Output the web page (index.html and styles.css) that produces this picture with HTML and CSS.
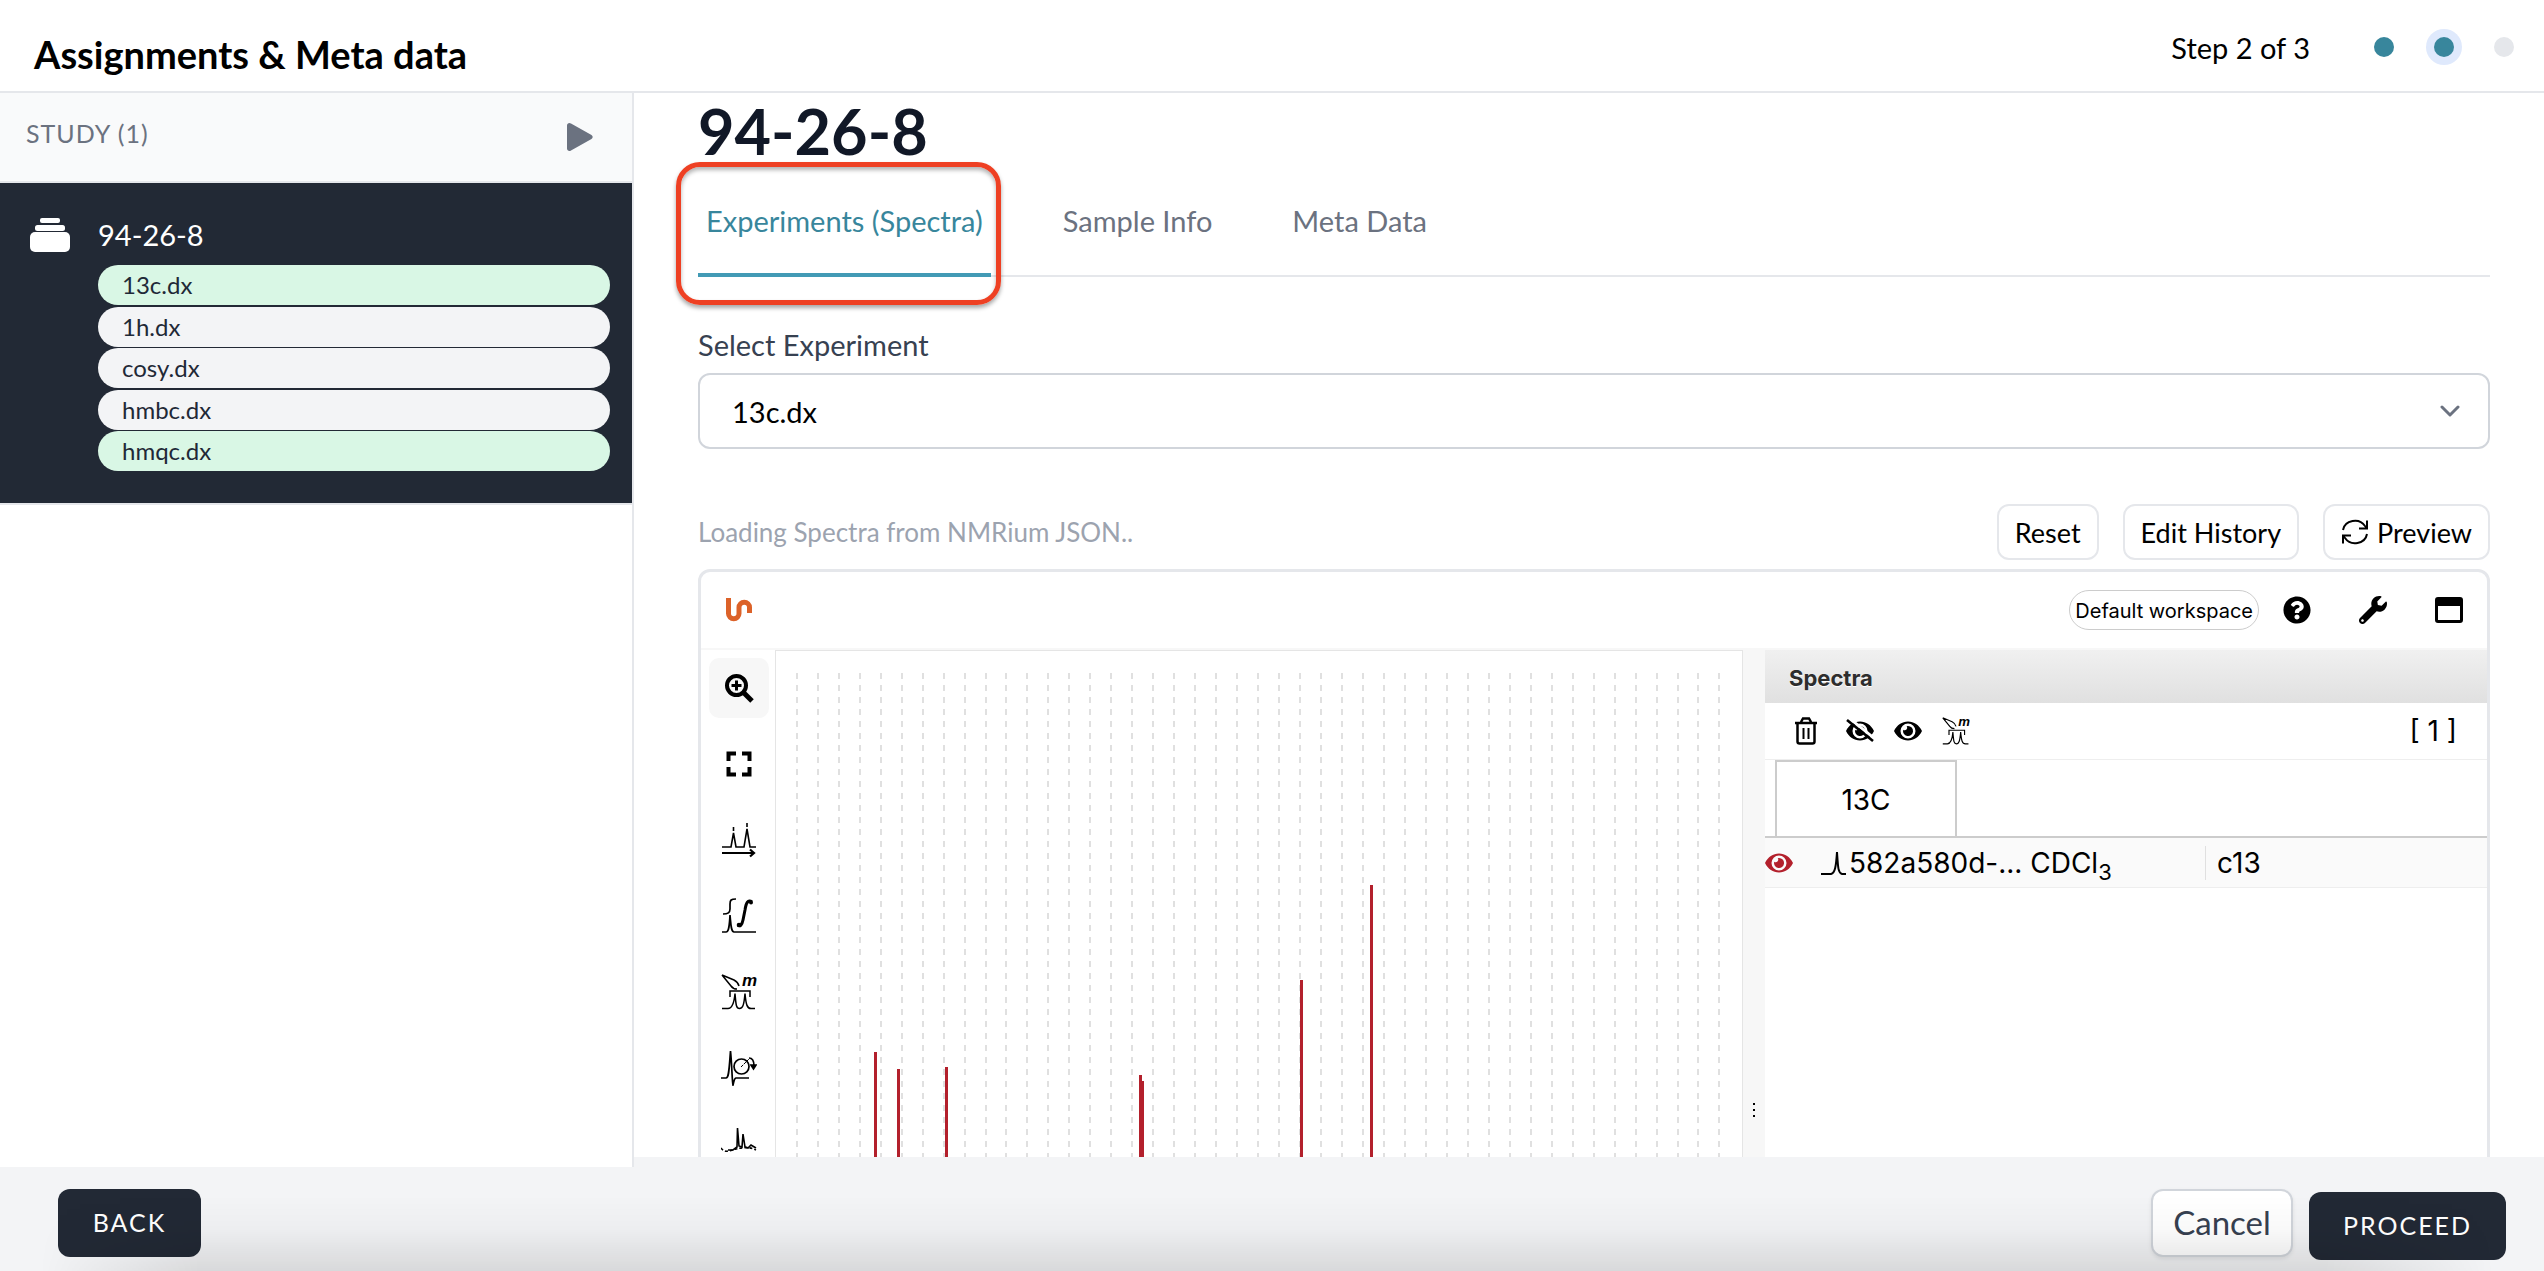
FILE: index.html
```html
<!DOCTYPE html>
<html lang="en">
<head>
<meta charset="utf-8">
<title>Assignments &amp; Meta data</title>
<link rel="stylesheet" href="styles.css">
</head>
<body>
<div class="page">
  <header class="topbar">
    <h2 class="topbar-title">Assignments &amp; Meta data</h2>
    <nav class="steps" aria-label="Progress">
      <span class="steps-label">Step 2 of 3</span>
      <span class="dot dot-done"></span>
      <span class="dot dot-current"></span>
      <span class="dot"></span>
    </nav>
  </header>

  <div class="body">
    <aside class="sidebar">
      <div class="study-head">
        <span class="study-label">STUDY (1)</span>
        <button class="icon-btn" aria-label="Play"><svg width="28" height="30" viewBox="0 0 28 30"><path d="M1 3.500C1 1.300 3.200.300 5 1.500L25.500 13c1.600 1 1.600 3 0 4L5 28.500C3.200 29.700 1 28.700 1 26.500z" fill="#6b7280"/></svg></button>
      </div>
      <section class="study">
        <svg class="study-icon" width="40" height="36" viewBox="0 0 40 36" fill="#fff"><rect x="10" y="1" width="20" height="5" rx="2"/><rect x="5" y="8" width="30" height="6" rx="2.500"/><rect x="0" y="15" width="40" height="20" rx="5"/></svg>
        <div class="study-body">
          <div class="study-name">94-26-8</div>
          <ul class="files">
            <li class="file file-done">13c.dx</li>
            <li class="file">1h.dx</li>
            <li class="file">cosy.dx</li>
            <li class="file">hmbc.dx</li>
            <li class="file file-done">hmqc.dx</li>
          </ul>
        </div>
      </section>
    </aside>

    <main class="main">
      <h1 class="main-title">94-26-8</h1>
      <nav class="tabs">
        <a class="tab tab-active" href="#experiments">Experiments (Spectra)</a>
        <a class="tab" href="#sample">Sample Info</a>
        <a class="tab" href="#meta">Meta Data</a>
      </nav>

      <label class="field-label" for="experiment">Select Experiment</label>
      <div class="select-wrap">
        <select id="experiment" class="select"><option>13c.dx</option><option>1h.dx</option></select>
        <svg class="chevron" width="20" height="12" viewBox="0 0 20 12" fill="none" stroke="#6b7280" stroke-width="3" stroke-linecap="round" stroke-linejoin="round"><path d="M2 2l8 8 8-8"/></svg>
      </div>

      <div class="actions">
        <span class="status">Loading Spectra from NMRium JSON..</span>
        <button class="btn">Reset</button>
        <button class="btn">Edit History</button>
        <button class="btn"><svg width="28" height="26" viewBox="0 0 28 26" fill="none" stroke="#000" stroke-width="2"><path d="M2 11A12 11 0 0 1 24 7l2 2.500M26 1.500v8h-8M26 15A12 11 0 0 1 4 19l-2-2.500M2 24.500v-8h8"/></svg>Preview</button>
      </div>

      <div class="nmr">
        <div class="nmr-top">
          <svg class="logo" width="28" height="26" viewBox="0 0 28 26" fill="none" stroke="#dc6229" stroke-width="5"><path d="M3.500 1v15.500a5.200 5.200 0 0 0 10.500 0v-6a5.200 5.200 0 0 1 10.500 0V16"/></svg>
          <div class="nmr-tools">
            <button class="workspace">Default workspace</button>
            <button class="icon-btn" aria-label="Help"><svg width="28" height="28" viewBox="0 0 512 512"><path d="M504 256c0 137-111 248-248 248S8 393 8 256 119 8 256 8s248 111 248 248zM262.700 90c-54.500 0-89.300 23-116.500 63.800-3.500 5.300-2.400 12.400 2.700 16.300l34.700 26.300c5.200 3.900 12.600 3 16.700-2.100 17.900-22.700 30.100-35.800 57.300-35.800 20.400 0 45.700 13.100 45.700 33 0 15-12.400 22.700-32.500 34C247.100 238.500 216 255 216 296v4c0 6.600 5.400 12 12 12h56c6.600 0 12-5.400 12-12v-1.300c0-28.500 83.200-29.600 83.200-106.700 0-58-60.200-102-116.500-102zM256 338c-25.400 0-46 20.600-46 46s20.600 46 46 46 46-20.600 46-46-20.600-46-46-46z"/></svg></button>
            <button class="icon-btn" aria-label="Settings"><svg width="28" height="28" viewBox="0 0 512 512"><path d="M507.700 109.100c-2.200-9-13.500-12.100-20.100-5.500l-74.400 74.400-67.900-11.300L334 98.900l74.400-74.400c6.600-6.600 3.400-17.900-5.700-20.200-47.400-11.700-99.600.9-136.600 37.900-39.600 39.600-50.500 97.100-34.100 147.200L18.700 402.800c-25 25-25 65.500 0 90.500s65.500 25 90.500 0l213.200-213.200c50.100 16.700 107.500 5.700 147.400-34.200 37-37 49.700-89.400 37.900-136.800zM64 472c-13.200 0-24-10.800-24-24 0-13.300 10.700-24 24-24s24 10.700 24 24c0 13.200-10.700 24-24 24z"/></svg></button>
            <button class="icon-btn" aria-label="Full screen"><svg width="28" height="26" viewBox="0 0 28 26"><path fill-rule="evenodd" d="M3 0h22a3 3 0 0 1 3 3v20a3 3 0 0 1-3 3H3a3 3 0 0 1-3-3V3a3 3 0 0 1 3-3zM3 9v14h22V9z"/></svg></button>
          </div>
        </div>

        <div class="nmr-body">
          <div class="toolbar">
            <button class="tool tool-active" aria-label="Zoom"><svg width="36" height="36" viewBox="0 0 36 36" fill="none" stroke="#000"><circle cx="15.500" cy="15.500" r="9.500" stroke-width="4"/><path d="M23 23l8 8" stroke-width="5"/><path d="M15.500 10.500v10M10.500 15.500h10" stroke-width="3"/></svg></button>
            <button class="tool" aria-label="Fit"><svg width="36" height="36" viewBox="0 0 36 36" fill="none" stroke="#000" stroke-width="4"><path d="M7.500 15V7.500H15M21 7.500h7.500V15M28.500 21v7.500H21M15 28.500H7.500V21"/></svg></button>
            <button class="tool" aria-label="Peak picking"><svg width="36" height="36" viewBox="0 0 36 36" fill="none" stroke="#000" stroke-width="1.600"><path d="M1 25h9l2.500-14L15 25h8l3-18 3 18h6M12.500 5v4M26 1v4"/><path d="M1 31h31M29 27.500l4 3.500-4 3.500" stroke-width="2.200"/></svg></button>
            <button class="tool" aria-label="Integration"><svg width="36" height="36" viewBox="0 0 36 36" fill="none" stroke="#000" stroke-width="1.700"><path d="M1 34h4c3 0 3.500-7 4-17 1 10 1 17 4 17h22M2 16c5 0 7-1 7-5V6c0-4 1-5 6-5"/><path d="M31 4c-4-3-6 1-7 8l-2 10c-1 5-3 7-5 5" stroke-width="3"/><circle cx="30" cy="4.500" r="2" fill="#000" stroke="none"/><circle cx="18" cy="27" r="2.300" fill="#000" stroke="none"/></svg></button>
            <button class="tool" aria-label="Multiplets"><svg width="36" height="36" viewBox="0 0 36 36"><use href="#multiplet"/></svg></button>
            <button class="tool" aria-label="Phase correction"><svg width="36" height="36" viewBox="0 0 36 36" fill="none" stroke="#000" stroke-width="1.700"><path d="M0 28h5c3 0 3-8 4.500-27 1.500 14 1.500 30 2.500 34 1-3 1-7 3-7h13"/><circle cx="20.500" cy="16.500" r="7.500"/><path d="M20 17l8-8" stroke-width="1" stroke-dasharray="3 1"/><path d="M28 8c3 0 5 3 5 8" /><path d="M30 15h5l-2.500 4z" fill="#000"/></svg></button>
            <button class="tool" aria-label="Baseline correction"><svg width="36" height="36" viewBox="0 0 36 36" fill="none" stroke="#000" stroke-width="1.600"><path d="M7 24h5l4-3 .500-19 1.500 18 3 1 1-13 2 13 3 1 3-3 5 3"/><path d="M0 22c4 6 10 2 15 1s12-3 20 1" stroke-dasharray="3 2"/></svg></button>
          </div>

          <div class="plot">
            <svg class="chart" width="966" height="540" viewBox="0 0 966 540" role="img" aria-label="13C spectrum">
              <path class="grid-lines" d="M22 23V540M43 23V540M64 23V540M85 23V540M106 23V540M127 23V540M148 23V540M169 23V540M190 23V540M211 23V540M231 23V540M252 23V540M273 23V540M294 23V540M315 23V540M336 23V540M357 23V540M378 23V540M399 23V540M420 23V540M441 23V540M462 23V540M483 23V540M504 23V540M525 23V540M546 23V540M567 23V540M588 23V540M609 23V540M630 23V540M651 23V540M672 23V540M693 23V540M714 23V540M735 23V540M756 23V540M777 23V540M798 23V540M819 23V540M840 23V540M861 23V540M882 23V540M903 23V540M923 23V540M944 23V540"/>
              <path class="peaks" d="M100.500 402V540M123.500 419V540M171.500 417V540M365.500 425V540M367.500 431V540M526.500 330V540M596.500 235V540"/>
            </svg>
          </div>

          <div class="splitter"><svg width="4" height="16" viewBox="0 0 4 16"><path d="M1 1h2v2H1zM1 7h2v2H1zM1 13h2v2H1z"/></svg></div>

          <section class="panel">
            <h3 class="panel-title">Spectra</h3>
            <div class="panel-tools">
              <button class="icon-btn icon-delete" aria-label="Delete"><svg width="24" height="28" viewBox="0 0 24 28" fill="none" stroke="#000" stroke-width="2.500"><path d="M1 6h22M7 5l2-3.500h6L17 5M3.500 6v18.500q0 2 2 2h13q2 0 2-2V6"/><path d="M9.500 11v11M14.500 11v11" stroke-width="2"/></svg></button>
              <button class="icon-btn" aria-label="Hide"><svg width="28" height="28" viewBox="0 0 28 28"><use href="#eye"/><path d="M3 1l26 21" stroke="#fff" stroke-width="3"/><path d="M1 3l26 21" stroke="#000" stroke-width="2.600"/></svg></button>
              <button class="icon-btn" aria-label="Show"><svg width="28" height="28" viewBox="0 0 28 28"><use href="#eye"/></svg></button>
              <button class="icon-btn" aria-label="Analyse multiplets"><svg width="28" height="28" viewBox="0 0 36 36"><use href="#multiplet"/></svg></button>
              <span class="count">[ 1 ]</span>
            </div>
            <div class="nuclei"><button class="nucleus">13C</button></div>
            <table class="spectra">
              <tr>
                <td class="col-eye"><svg width="28" height="28" viewBox="0 0 28 28" fill="#b3202c"><use href="#eye"/></svg></td>
                <td class="col-name"><svg class="peak-icon" width="26" height="26" viewBox="0 0 26 26" fill="none" stroke="#000" stroke-width="2"><path d="M0 24h10c4-1 5-7 6-22 1 15 1 21 5 22h4"/></svg>582a580d-... CDCl<sub>3</sub></td>
                <td class="col-exp"><span class="exp">c13</span></td>
              </tr>
            </table>
          </section>
        </div>
      </div>
    </main>
  </div>

  <footer class="footer">
    <button class="foot-btn foot-dark foot-back">BACK</button>
    <button class="foot-btn foot-light">Cancel</button>
    <button class="foot-btn foot-dark foot-proceed">PROCEED</button>
  </footer>
</div>

<svg class="defs" width="0" height="0">
  <defs>
    <g id="eye"><path fill-rule="evenodd" d="M0 14C3 8 8 4.500 14 4.500S25 8 28 14c-3 6-8 9.500-14 9.500S3 20 0 14zM14 6.500a7.500 7.500 0 1 0 0 15 7.500 7.500 0 0 0 0-15zM14 9a5 5 0 1 1-4.800 3.700 2.500 2.500 0 0 0 3.500-3.500A5 5 0 0 1 14 9z"/></g>
    <g id="multiplet" fill="none" stroke="#000" stroke-width="1.500"><path d="M1 1l12 5q4 2 5 6M1 1l9 11q2 3 6 3M9 23v-6h20v6"/><path d="M1 34.500h6c4 0 6-4 7-15 1 11 1 15 4.500 15s4.500-4 5.500-15c1 11 2 15 6 15h4"/><text class="glyph-m" x="21" y="12">m</text></g>
  </defs>
</svg>
</body>
</html>
```
FILE: styles.css
```css
* { box-sizing: border-box; }
body { margin: 0; background: #fff; color: #000; font-family: Lato, "Open Sans", sans-serif; font-size: 29px; }
h1, h2, h3, ul { margin: 0; padding: 0; }
button { font: inherit; color: inherit; cursor: pointer; }
svg { display: block; flex: none; }
.defs { position: absolute; }
.icon-btn { display: flex; padding: 0; border: 0; background: none; }

.page { display: flex; flex-direction: column; height: 100vh; overflow: hidden; }

.topbar { display: flex; justify-content: space-between; flex: none; height: 93px; padding: 0 30px 0 34px; border-bottom: 2px solid #e5e7eb; }
.topbar-title { padding-top: 32px; font-size: 38px; line-height: 44px; font-weight: 700; }
.steps { display: flex; align-items: center; align-self: flex-start; height: 94px; gap: 40px; }
.steps-label { padding-right: 24px; }
.dot { width: 20px; height: 20px; border-radius: 50%; background: #e5e7eb; }
.dot-done, .dot-current { background: #38869c; }
.dot-current { box-shadow: 0 0 0 8px #dfe9fc; }

.body { display: flex; flex: 1; min-height: 0; }
.sidebar { position: relative; z-index: 1; flex: none; width: 634px; margin-bottom: -10px; border-right: 2px solid #e5e7eb; background: #fff; }
.study-head { display: flex; justify-content: space-between; align-items: flex-start; height: 90px; padding: 24px 38px 0 26px; border-bottom: 2px solid #e5e7eb; background: #f9fafb; }
.study-head .icon-btn { margin-top: 5px; }
.study-label { color: #6b7280; font-size: 25px; line-height: 32px; letter-spacing: 1px; }
.study { display: flex; gap: 28px; padding: 32px 22px 32px 30px; border-bottom: 2px solid #e5e7eb; background: #222935; }
.study-icon { margin-top: 2px; }
.study-body { flex: 1; }
.study-name { height: 50px; color: #fff; line-height: 40px; }
.files { display: flex; flex-direction: column; justify-content: space-between; height: 206px; list-style: none; }
.file { height: 40px; padding-left: 24px; border-radius: 20px; background: #f3f4f6; color: #1f2937; font-size: 24px; line-height: 40px; }
.file-done { background: #d9f7e5; }

.main { flex: 1; min-width: 0; padding: 0 54px 0 64px; overflow: hidden; }
.main-title { color: #111827; font-size: 63px; line-height: 76px; font-weight: 700; }
.tabs { display: flex; gap: 64px; height: 108px; border-bottom: 2px solid #e5e7eb; }
.tab { position: relative; display: block; height: 108px; padding: 32px 8px 0; border-bottom: 4px solid transparent; color: #6b7280; line-height: 40px; text-decoration: none; }
.tab-active { border-color: #429ab5; color: #38869c; }
.tab-active::after { content: ""; position: absolute; inset: -7px -10px -32px -22px; border: 5px solid #ee4023; border-radius: 24px; box-shadow: 0 3px 4px rgba(0,0,0,.35), inset 0 3px 4px rgba(0,0,0,.3); }
.field-label { display: block; margin-top: 48px; height: 48px; color: #374151; line-height: 40px; }
.select-wrap { position: relative; }
.select { display: block; width: 100%; height: 76px; padding: 0 32px; border: 2px solid #d1d5db; border-radius: 12px; appearance: none; background: #fff; color: #000; font: inherit; }
.chevron { position: absolute; right: 30px; top: 32px; }
.actions { display: flex; align-items: center; gap: 24px; margin-top: 55px; }
.status { flex: 1; color: #9ca3af; font-size: 26px; }
.btn { display: flex; align-items: center; gap: 8px; height: 56px; padding: 0 16px; border: 2px solid #e5e7eb; border-radius: 12px; background: #fff; font-size: 27px; }

.nmr { margin-top: 9px; border: 3px solid #e5e7eb; border-radius: 12px; font-family: Inter, "Liberation Sans", sans-serif; font-size: 28px; overflow: hidden; }
.nmr-top { display: flex; justify-content: space-between; align-items: center; height: 78px; padding: 0 24px; border-bottom: 2px solid #f7f7f7; }
.nmr-tools { display: flex; align-items: center; gap: 48px; }
.workspace { height: 40px; margin-right: -24px; padding: 2px 5px 0; border: 1px solid #ccc; border-radius: 20px; background: #fff; font-size: 20px; }
.nmr-body { display: flex; height: 540px; }
.toolbar { display: flex; flex: none; flex-direction: column; gap: 16px; width: 74px; padding: 8px; }
.tool { display: flex; align-items: center; justify-content: center; width: 60px; height: 60px; flex: none; padding: 0; border: 0; border-radius: 10px; background: none; }
.tool-active { background: #f7f7f7; }
.plot { flex: 1; min-width: 0; border: 1px solid #e5e5e5; border-bottom: 0; overflow: hidden; }
.chart { margin: -1px; }
.grid-lines { fill: none; stroke: #e0e0e0; stroke-width: 2; stroke-dasharray: 6 6; }
.peaks { stroke: #b3202c; stroke-width: 3; }
.splitter { display: flex; flex: none; width: 22px; padding: 452px 0 0 9px; background: #f7f7f7; }
.panel { flex: none; width: 722px; }
.panel-title { height: 53px; padding: 2px 0 0 24px; background: linear-gradient(#f0f0f0, #e0e0e0); color: #2d2d2d; font-size: 22px; line-height: 52px; font-weight: 700; text-shadow: 0 1px 0 #fff; }
.panel-tools { display: flex; align-items: center; gap: 20px; height: 57px; padding: 0 30px 0 29px; border-bottom: 1px solid #eee; }
.icon-delete { margin-right: 8px; }
.count { margin-left: auto; }
.nuclei { height: 78px; padding-left: 10px; border-bottom: 2px solid #ccc; }
.nucleus { width: 182px; height: 76px; padding: 2px 0 0; border: 2px solid #ccc; border-bottom: 0; background: #fff; }
.spectra { width: 100%; height: 50px; border-collapse: collapse; border-bottom: 1px solid #eee; background: #fafafa; table-layout: fixed; }
.spectra td { padding: 0; line-height: 40px; white-space: nowrap; }
.spectra .col-eye { width: 56px; }
.spectra .col-name { width: 384px; }
.peak-icon { display: inline-block; margin-right: 2px; vertical-align: -3px; }
.spectra sub { font-size: 22px; line-height: 0; }
.exp { display: block; height: 34px; padding-left: 11px; border-left: 1px solid #e0e0e0; line-height: 34px; }
.glyph-m { fill: #000; stroke: none; font: italic 700 17px "Liberation Sans", sans-serif; }

.footer { position: relative; display: flex; flex: none; height: 114px; padding: 32px 38px 0 58px; background: #f3f4f6; }
.footer::after { content: ""; position: absolute; inset: auto 0 0; height: 76px; background: linear-gradient(transparent, rgba(0,0,0,.025) 45%, rgba(0,0,0,.11)); mask-image: linear-gradient(90deg, transparent 40px, #000 200px, #000 calc(100% - 220px), transparent calc(100% - 50px)); pointer-events: none; }
.foot-btn { height: 68px; border: 0; border-radius: 12px; }
.foot-dark { padding: 0 0 2px; background: #222935; color: #fff; font-size: 25px; letter-spacing: 2px; }
.foot-back { width: 143px; margin-right: auto; }
.foot-light { width: 142px; margin-right: 16px; padding: 0 0 2px; border: 2px solid #d1d5db; background: #fff; color: #374151; font-size: 33px; box-shadow: 0 2px 4px rgba(0,0,0,.08); }
.foot-proceed { width: 197px; margin-top: 3px; }
```
